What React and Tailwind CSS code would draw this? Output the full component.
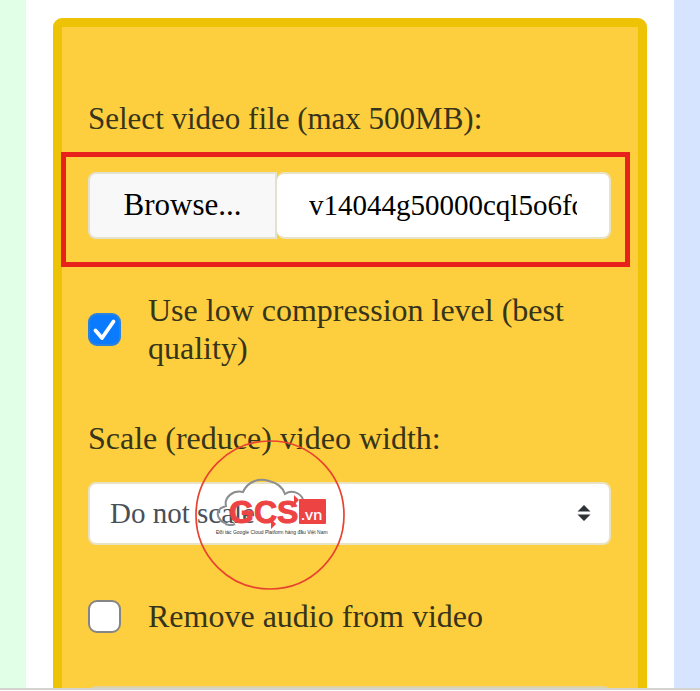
import React, { useState } from 'react';

const GcsLogo = () => (
  <svg viewBox="0 0 150 150" className="h-full w-full" fill="none">
    <circle cx="75" cy="75" r="74" stroke="#e8432f" strokeWidth="1.7" />
    {/* Cloud */}
    <path
      d="M40 84 C36 86 31 85 30 83 C24 81 21 74 24 70 C26 67 29 67 31 66 C29 57 38 50 48 52 C53 41 64 38 74 41 C83 43 88 48 90 54 C97 49 105 53 108 59"
      stroke="#8b8d8f"
      strokeWidth="2"
    />
    <text
      x="34"
      y="83"
      fontFamily="Liberation Sans, sans-serif"
      fontWeight="700"
      fontSize="32"
      fill="#ee4343"
      stroke="#ee4343"
      strokeWidth="1"
    >
      GCS
    </text>
    {/* Arrow heads */}
    <path d="M76 79 L81 84 L76 89 Z M99 55 L104 60 L99 65 Z" fill="#ee4343" />
    <rect x="104" y="59" width="27" height="25" rx="1" fill="#ee4343" />
    <text x="106" y="80" fontFamily="Open Sans, sans-serif" fontWeight="600" fontSize="15" fill="#ffffff">
      .vn
    </text>
    <text x="21" y="94" fontFamily="Liberation Sans, sans-serif" fontSize="5" fill="#2f2f2f">
      Đối tác Google Cloud Platform hàng đầu Việt Nam
    </text>
  </svg>
);

const CheckOption = ({ id, label, checked, onChange }) => (
  <div className="flex items-center gap-[27px]">
    <span className="relative flex shrink-0">
      <input
        id={id}
        type="checkbox"
        checked={checked}
        onChange={(e) => onChange(e.target.checked)}
        className="h-[33px] w-[33px] appearance-none rounded-[9px] border-2 border-[#858585] bg-white checked:border-[#2a82dc] checked:bg-[#0a7aff]"
      />
      {checked && (
        <svg viewBox="0 0 33 33" className="pointer-events-none absolute inset-0" fill="none">
          <path
            d="M7.5 17.5 L14 25 L25.5 8.5"
            stroke="#ffffff"
            strokeWidth="3.8"
            strokeLinecap="round"
            strokeLinejoin="round"
          />
        </svg>
      )}
    </span>
    <label htmlFor={id} className="text-[32px] leading-[38px]">
      {label}
    </label>
  </div>
);

const App = () => {
  const [lowCompression, setLowCompression] = useState(true);
  const [removeAudio, setRemoveAudio] = useState(false);

  return (
    <div className="flex h-screen flex-col overflow-hidden font-['Liberation_Serif',serif] text-[#36341a]">
      <div className="flex min-h-0 flex-1 overflow-hidden">
        <div className="w-[26px] shrink-0 bg-[#e0ffe6]" />

        <main className="min-w-0 flex-1 bg-white px-[27px] pt-[18px]">
          <form className="rounded-[9px] border-[9px] border-[#efc305] bg-[#fdce3e] pt-[73px] pr-[27px] pb-16 pl-[26px]">
            {/* File picker */}
            <label htmlFor="file" className="block text-[31px] leading-[38px]">
              Select video file (max 500MB):
            </label>
            <div className="relative mt-[34px] flex h-[67px] text-black">
              <button
                type="button"
                className="w-[189px] shrink-0 rounded-l-[8px] border-2 border-[#e4e2cf] bg-[#f8f8f8] text-[31px]"
              >
                Browse...
              </button>
              <input
                id="file"
                type="text"
                readOnly
                defaultValue="v14044g50000cql5o6foc"
                className="min-w-0 flex-1 rounded-[8px] border-y-2 border-r-2 border-[#e9e2c4] bg-white px-8 text-[29px] outline-none"
              />
              {/* Highlight frame */}
              <div className="pointer-events-none absolute -top-5 -right-[19px] -bottom-7 -left-[27px] border-[5px] border-[#e8211d]" />
            </div>

            <div className="mt-[52px]">
              <CheckOption
                id="low"
                label="Use low compression level (best quality)"
                checked={lowCompression}
                onChange={setLowCompression}
              />
            </div>

            {/* Scale */}
            <label htmlFor="scale" className="mt-[52px] block text-[32px] leading-[38px]">
              Scale (reduce) video width:
            </label>
            <div className="relative mt-[25px]">
              <select
                id="scale"
                className="block h-[63px] w-full appearance-none rounded-[8px] border-2 border-[#e9e2c4] bg-white px-5 text-[29px] text-[#495057]"
              >
                <option>Do not scale</option>
              </select>
              <svg
                viewBox="0 0 14 18"
                className="pointer-events-none absolute top-[22px] right-5 h-[18px] w-[14px]"
                fill="#2f3336"
              >
                <path d="M7 1 L13.5 7.5 H0.5 Z M7 17 L13.5 10.5 H0.5 Z" />
              </svg>
              <div className="pointer-events-none absolute -top-[42px] left-[107px] h-[150px] w-[150px]">
                <GcsLogo />
              </div>
            </div>

            <div className="mt-[52px]">
              <CheckOption
                id="audio"
                label="Remove audio from video"
                checked={removeAudio}
                onChange={setRemoveAudio}
              />
            </div>

            <div className="mt-[51px] h-[63px] rounded-[8px] border-2 border-[#ddd3a5] bg-white" />
          </form>
        </main>

        <div className="w-[26px] shrink-0 bg-[#d7e4ff]" />
      </div>
      <div className="h-[3px] shrink-0 border-t-2 border-[#d3d3cf] bg-white" />
    </div>
  );
};

export default App;
